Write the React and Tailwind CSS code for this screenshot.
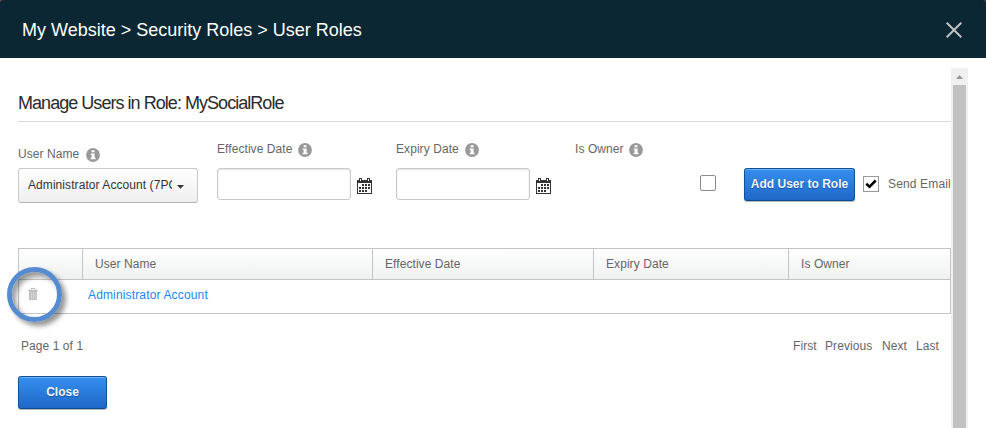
function Info() {
  return (
    <svg width="14" height="14" viewBox="0 0 14 14" className="mt-[3px] shrink-0">
      <circle cx="7" cy="7" r="6.9" fill="#999" />
      <path d="M5.6 2.3h2.9v2H5.6zM4.7 5.4h3.9v4.4h1v1.4H4.6V9.8h1V6.8h-.9z" fill="#fff" />
    </svg>
  );
}

function Calendar() {
  return (
    <svg width="15" height="16" viewBox="0 0 15 16" className="ml-[6px] mt-[10px] shrink-0" shapeRendering="crispEdges">
      <path d="M0 2h15v14H0z" fill="#333" />
      <path d="M1 5h13v10H1z" fill="#fff" />
      <path d="M2 0h3v4H2zM10 0h3v4h-3z" fill="#333" />
      <path d="M3 1h1v2H3zM11 1h1v2h-1z" fill="#fff" />
      <path d="M5 6h2v2H5zM8 6h2v2H8zM11 6h2v2h-2zM2 9h2v2H2zM5 9h2v2H5zM8 9h2v2H8zM11 9h2v2h-2zM2 12h2v2H2zM5 12h2v2H5zM8 12h2v2H8z" fill="#333" />
    </svg>
  );
}

function Label({ children, className }) {
  return (
    <div className="flex h-[28px]">
      <span className={`mt-px h-[16px] whitespace-nowrap leading-[16px] ${className}`}>{children}</span>
      <Info />
    </div>
  );
}

function DateField({ label, labelClass, className }) {
  return (
    <div className={className}>
      <div className="h-[28px]">
        <Label className={labelClass}>{label}</Label>
      </div>
      <div className="flex">
        <input
          readOnly
          className="h-[32px] w-[134px] rounded-[3px] border border-[#c9c9c9] bg-white shadow-[inset_0_1px_2px_rgba(0,0,0,0.12)] outline-none"
        />
        <Calendar />
      </div>
    </div>
  );
}

function BlueButton({ children, className }) {
  return (
    <button
      className={`h-[33px] shrink-0 whitespace-nowrap rounded-[3px] border border-[#0f5296] border-b-[#0a4a8e] bg-linear-to-b from-[#358eee] to-[#1f69c9] pb-[2px] text-[12px] font-bold text-[#eef4fc] shadow-[inset_0_1px_0_#6fb1f6,0_1px_1px_rgba(0,0,0,0.3)] [text-shadow:0_1px_1px_rgba(0,0,0,0.3)] ${className}`}
    >
      {children}
    </button>
  );
}

export default function App() {
  return (
    <div className="h-[428px] w-[986px] overflow-hidden bg-white font-['Liberation_Sans',Arial,sans-serif] text-[12px] tracking-[0.07px] text-[#666]">
      <div className="h-[58px] bg-[#4a4a4a]">
        <header className="flex h-[58px] items-center justify-between rounded-t-[4px] bg-[#0a2733] pl-[22px] pr-[24px] pt-[2px]">
          <h1 className="text-[18px] leading-[22px] tracking-normal text-white">My Website &gt; Security Roles &gt; User Roles</h1>
          <svg width="16" height="16" viewBox="0 0 16 16" stroke="#c0c3c4" strokeWidth="2" fill="none">
            <path d="M.7.7l14.6 14.6M15.3.7L.7 15.3" />
          </svg>
        </header>
      </div>
      <div className="flex h-[370px]">
        <main className="w-[951px] shrink-0 pl-[18px]">
          <h2 className="h-[64px] border-b border-[#d8d8d8] pt-[35px] text-[18px] leading-[20px] tracking-[-0.96px] text-[#2a2a2a]">
            Manage Users in Role: MySocialRole
          </h2>
          <div className="flex h-[126px] pt-[18px]">
            <div className="w-[199px] pt-[5px]">
              <div className="h-[23px]">
                <Label className="w-[68px]">User Name</Label>
              </div>
              <div className="flex h-[35px] w-[180px] items-center rounded-[3px] border border-[#c9c9c9] border-b-[#b5b5b5] bg-linear-to-b from-white to-[#efefef] pl-[9px] text-[#333]">
                <span className="mb-[2px] w-[144px] overflow-hidden whitespace-nowrap leading-[16px]">Administrator Account (7PC)</span>
                <svg width="7" height="4" viewBox="0 0 7 4" className="ml-[5px] mt-[2px]">
                  <path d="M0 0h7L3.5 3.8z" fill="#333" />
                </svg>
              </div>
            </div>
            <DateField label="Effective Date" labelClass="w-[81px]" className="w-[179px]" />
            <DateField label="Expiry Date" labelClass="w-[69px]" className="w-[179px]" />
            <div className="w-[125px]">
              <Label className="w-[54px]">Is Owner</Label>
            </div>
            <div className="flex pt-[28px]">
              <span className="mt-[7px] h-[16px] w-[16px] rounded-[2px] border border-[#8c8c8c] bg-white" />
              <BlueButton className="ml-[28px] w-[111px] tracking-normal">Add User to Role</BlueButton>
              <span className="ml-[8px] mt-[8px] flex h-[16px] w-[16px] shrink-0 items-center justify-center border border-[#999] bg-white">
                <svg width="12" height="10" viewBox="0 0 12 10" fill="none" stroke="#000" strokeWidth="2.6">
                  <path d="M1.3 4.8l3.2 3L10.7 1.5" />
                </svg>
              </span>
              <span className="ml-[9px] mt-[8px] whitespace-nowrap leading-[16px] tracking-[0.15px]">Send Email</span>
            </div>
          </div>
          <div className="relative h-[66px] border border-[#c4c4c4]">
            <div className="grid h-[31px] grid-cols-[64px_290px_221px_195px_1fr] border-b border-[#c4c4c4] bg-linear-to-b from-white to-[#eff0f0] leading-[30px]">
              <span className="border-r border-[#c4c4c4]" />
              <span className="border-r border-[#c4c4c4] pl-[12px]">User Name</span>
              <span className="border-r border-[#c4c4c4] pl-[12px]">Effective Date</span>
              <span className="border-r border-[#c4c4c4] pl-[12px]">Expiry Date</span>
              <span className="pl-[12px]">Is Owner</span>
            </div>
            <div className="flex h-[33px] pl-[9px] leading-[30px]">
              <svg width="10" height="12" viewBox="0 0 10 12" className="mt-[8px]">
                <path d="M3 2V.5h4V2M0 2.5h10" stroke="#bdbdbd" fill="none" />
                <path d="M1 3h8v9H1z" fill="#c2c2c2" />
                <path d="M3.5 4.5v6M5.5 4.5v6M7.3 4.5v6" stroke="#e4e4e4" strokeWidth=".6" />
              </svg>
              <a className="ml-[50px] tracking-[0.15px] text-[#1a86f8]">Administrator Account</a>
            </div>
            <span className="absolute -left-[12px] top-[18px] h-[55px] w-[55px] rounded-full border-[5px] border-[#568bd0] shadow-[4px_4px_5px_rgba(0,0,0,0.42),inset_4px_4px_5px_rgba(0,0,0,0.38)]" />
          </div>
          <div className="flex h-[62px] pl-[3px] pt-[24px] leading-[16px]">
            <span className="w-[772px]">Page 1 of 1</span>
            <span className="w-[32px]">First</span>
            <span className="w-[57px]">Previous</span>
            <span className="w-[34px]">Next</span>
            <span>Last</span>
          </div>
          <BlueButton className="block w-[89px] tracking-normal">Close</BlueButton>
        </main>
        <aside className="mt-[10px] w-[17px] bg-[#f0f0f0] pl-[2px]">
          <div className="flex h-[17px] w-[13px] items-center justify-center">
            <svg width="7" height="4" viewBox="0 0 7 4"><path d="M3.5 0L7 4H0z" fill="#999" /></svg>
          </div>
          <div className="h-[343px] w-[13px] bg-[#c1c1c1]" />
        </aside>
      </div>
    </div>
  );
}
